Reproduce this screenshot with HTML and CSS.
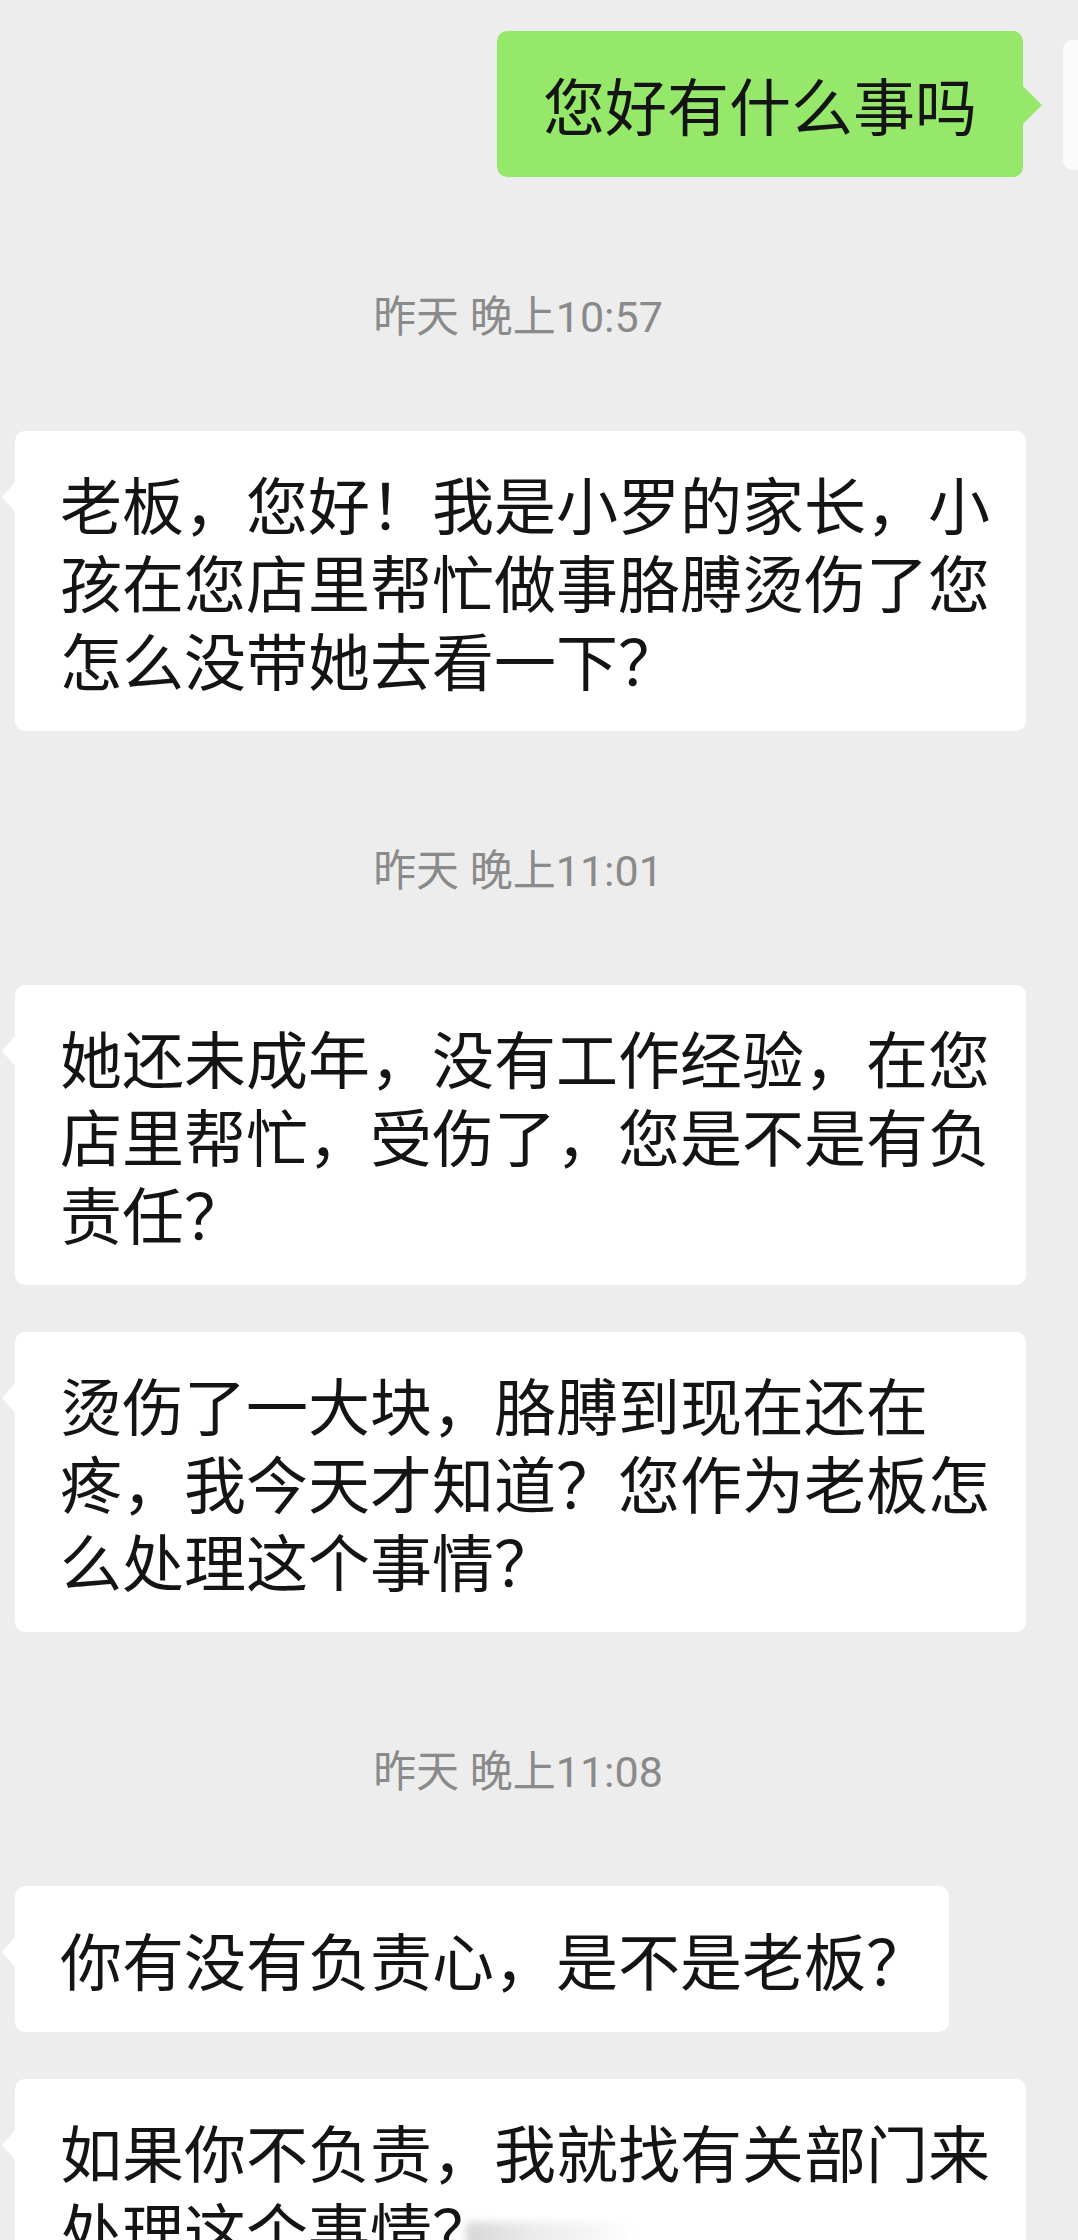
FILE: index.html
```html
<!DOCTYPE html>
<html lang="zh-CN">
<head>
<meta charset="utf-8">
<title>聊天</title>
<link rel="stylesheet" href="styles.css">
</head>
<body>
<main class="chat">
  <div class="row row-right">
    <div class="bubble bubble-green">您好有什么事吗</div>
    <div class="avatar"></div>
  </div>

  <div class="time">昨天 晚上10:57</div>

  <div class="row row-left">
    <div class="bubble bubble-white">老板，您好！我是小罗的家长，小孩在您店里帮忙做事胳膊烫伤了您怎么没带她去看一下？</div>
  </div>

  <div class="time">昨天 晚上11:01</div>

  <div class="row row-left">
    <div class="bubble bubble-white">她还未成年，没有工作经验，在您店里帮忙，受伤了，您是不是有负责任？</div>
  </div>

  <div class="row row-left">
    <div class="bubble bubble-white">烫伤了一大块，胳膊到现在还在疼，我今天才知道？您作为老板怎么处理这个事情？</div>
  </div>

  <div class="time">昨天 晚上11:08</div>

  <div class="row row-left">
    <div class="bubble bubble-white bubble-single">你有没有负责心，是不是老板？</div>
  </div>

  <div class="row row-left">
    <div class="bubble bubble-white">如果你不负责，我就找有关部门来处理这个事情？<span class="smudge"></span></div>
  </div>
</main>
</body>
</html>
```

FILE: styles.css
```css
html, body {
  margin: 0;
  padding: 0;
}

body {
  width: 1078px;
  height: 2240px;
  overflow: hidden;
  background: #ededed;
  font-family: "Noto Sans CJK SC", "Noto Sans", sans-serif;
  color: #141414;
}

.chat {
  display: flex;
  flex-direction: column;
  gap: 47px;
  padding-top: 31px;
}

.row {
  display: flex;
  align-items: flex-start;
}

.row-left {
  padding-left: 15px;
}

.row-right {
  justify-content: flex-end;
}

.bubble {
  position: relative;
  box-sizing: border-box;
  font-size: 62px;
  line-height: 78px;
  border-radius: 10px;
}

.bubble-green {
  background: #96e86a;
  padding: 34px 46px;
  margin-right: 40px;
}

.bubble-green::after {
  content: "";
  position: absolute;
  right: -19px;
  top: 54px;
  width: 0;
  height: 0;
  border-left: 20px solid #96e86a;
  border-top: 20px solid transparent;
  border-bottom: 20px solid transparent;
}

.avatar {
  width: 15px;
  height: 130px;
  margin-top: 9px;
  background: #fbfbfb;
  border-radius: 9px 0 0 9px;
}

.bubble-white {
  background: #ffffff;
  max-width: 1011px;
  padding: 33px 21px 33px 45px;
}

.bubble-single {
  padding-top: 34px;
  padding-bottom: 34px;
}

.bubble-white::before {
  content: "";
  position: absolute;
  left: -13px;
  top: 50px;
  width: 0;
  height: 0;
  border-right: 14px solid #ffffff;
  border-top: 16px solid transparent;
  border-bottom: 16px solid transparent;
}

.time {
  height: 50px;
  line-height: 50px;
  margin: 68px 0 42px;
  padding-right: 42px;
  text-align: center;
  font-family: Roboto, "Noto Sans CJK SC", sans-serif;
  font-size: 43px;
  color: #8a8a8a;
}

.smudge {
  display: inline-block;
  width: 170px;
  height: 34px;
  margin-left: -28px;
  vertical-align: middle;
  background: linear-gradient(90deg, #d6d6d6, #ececec 40%, #f4f4f4 70%, #ffffff);
  filter: blur(4px);
}
```
